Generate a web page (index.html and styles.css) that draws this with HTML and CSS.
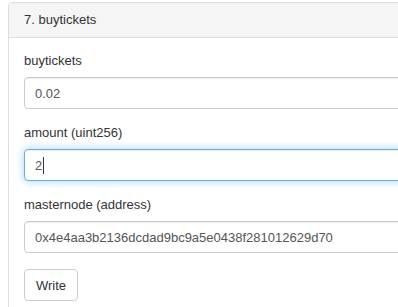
FILE: index.html
```html
<!DOCTYPE html>
<html lang="en">
<head>
    <meta charset="UTF-8">
    <meta name="viewport" content="width=device-width, initial-scale=1.0">
    <title>buytickets</title>
    <link rel="stylesheet" href="styles.css">
</head>
<body>
    <div class="panel">
        <div class="panel-heading">7. buytickets</div>
        <div class="panel-body">
            <div class="form-group">
                <label for="buytickets">buytickets</label>
                <input type="text" id="buytickets" class="form-control" value="0.02">
            </div>
            <div class="form-group">
                <label for="amount">amount (uint256)</label>
                <div class="field-wrap">
                    <input type="text" id="amount" class="form-control is-focused" value="2">
                    <span class="caret"></span>
                </div>
            </div>
            <div class="form-group">
                <label for="masternode">masternode (address)</label>
                <input type="text" id="masternode" class="form-control" value="0x4e4aa3b2136dcdad9bc9a5e0438f281012629d70">
            </div>
            <button class="btn">Write</button>
        </div>
    </div>
</body>
</html>
```

FILE: styles.css
```css
html, body {
    overflow: hidden;
}
body {
    font-family: "Liberation Sans", Arial, sans-serif;
    font-size: 13px;
    line-height: 18px;
    color: #333;
    margin: 2px 0 0 8px;
    background: #fff;
}
.panel {
    width: 460px;
    border: 1px solid #ddd;
    border-radius: 4px;
    background: #fff;
}
.panel-heading {
    background: #f5f5f5;
    border-bottom: 1px solid #ddd;
    padding: 8px 15px;
    border-radius: 3px 3px 0 0;
}
.panel-body {
    padding: 14px 15px 20px;
}
.form-group {
    margin-bottom: 15px;
}
.form-group label {
    display: block;
    margin-bottom: 7px;
}
.field-wrap {
    position: relative;
}
.form-control {
    display: block;
    box-sizing: border-box;
    width: 100%;
    height: 32px;
    padding: 0 10px;
    font-family: inherit;
    font-size: 13px;
    color: #555;
    background: #fff;
    border: 1px solid #ccc;
    border-radius: 4px;
    box-shadow: inset 0 1px 1px rgba(0, 0, 0, .075);
    outline: none;
}
.form-control.is-focused {
    border-color: #66afe9;
    box-shadow: inset 0 1px 1px rgba(0, 0, 0, .075), 0 0 8px rgba(102, 175, 233, .6);
}
.caret {
    position: absolute;
    left: 19px;
    top: 8px;
    width: 1px;
    height: 17px;
    background: #333;
}
.btn {
    display: block;
    margin-top: 16px;
    height: 32px;
    padding: 0 11px;
    font-family: inherit;
    font-size: 13px;
    color: #333;
    background: #fff;
    border: 1px solid #ccc;
    border-radius: 4px;
}
```
